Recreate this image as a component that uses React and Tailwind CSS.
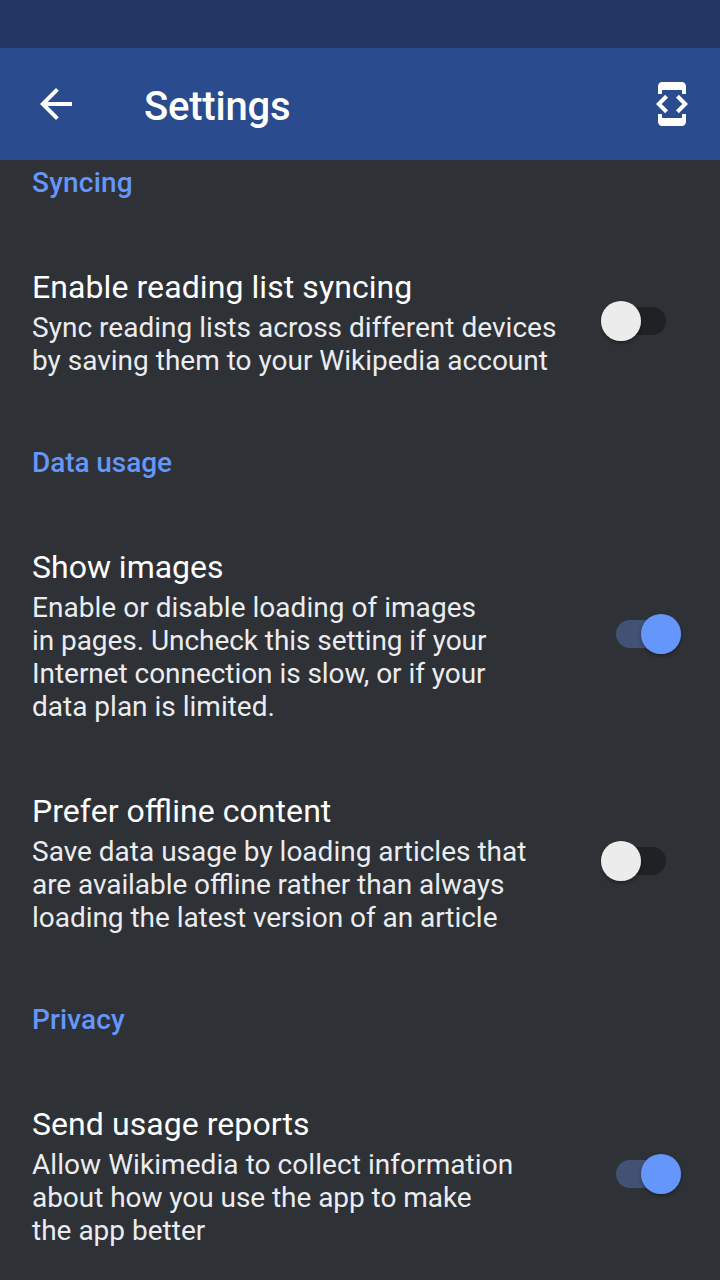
function Toggle({ on }) {
  return (
    <svg className="mb-1 h-12 w-[88px] shrink-0" viewBox="0 0 88 48" aria-hidden="true">
      <defs>
        <filter id="thumb-shadow" x="-30%" y="-30%" width="160%" height="160%">
          <feDropShadow dx="0" dy="2" stdDeviation="2" floodOpacity="0.35" />
        </filter>
      </defs>
      <rect x="16" y="10" width="50" height="28" rx="14" fill={on ? "#415274" : "#202124"} />
      <circle cx={on ? 61 : 21} cy="24" r="20" fill={on ? "#6596fb" : "#ececec"} filter="url(#thumb-shadow)" />
    </svg>
  );
}

function Category({ children, className }) {
  return <h2 className={`text-[28px] leading-[33px] font-medium text-[#6496fb] ${className}`}>{children}</h2>;
}

function Preference({ title, titleClass = "", lines, on }) {
  return (
    <section className="mt-[69px] flex items-center justify-between">
      <div className="whitespace-nowrap">
        <h3 className={`mb-[5px] text-[32px] leading-[38px] text-white ${titleClass}`}>{title}</h3>
        {lines.map(([text, tracking]) => (
          <p key={text} className={`text-[28px] leading-[33px] text-[#eaecf0] ${tracking}`}>{text}</p>
        ))}
      </div>
      <Toggle on={on} />
    </section>
  );
}

export default function App() {
  return (
    <div className="flex h-[1280px] w-[720px] flex-col overflow-hidden bg-[#2e3136] font-['Roboto',sans-serif] [font-feature-settings:'liga'_1]">
      <div className="h-12 shrink-0 bg-[#223863]" />
      <header className="flex h-28 shrink-0 items-center bg-[#2a4b8d] px-8 text-white">
        <svg className="size-12" viewBox="0 0 24 24" fill="currentColor">
          <path d="M20 11H7.83l5.59-5.59L12 4l-8 8 8 8 1.41-1.41L7.83 13H20v-2z" />
        </svg>
        <h1 className="ml-16 grow pt-[6px] text-[40px] font-medium tracking-[-0.2px]">Settings</h1>
        <svg className="-mr-2 size-12" viewBox="0 0 24 24" fill="currentColor">
          <path d="M7 5h10v2h2V3c0-1.1-.9-1.99-2-1.99L7 1c-1.1 0-2 .9-2 2v4h2V5zm8.41 11.59L20 12l-4.59-4.59L14 8.83 17.17 12 14 15.17l1.41 1.42zM10 15.17L6.83 12 10 8.83 8.59 7.41 4 12l4.59 4.59L10 15.17zM17 19H7v-2H5v4c0 1.1.9 2 2 2h10c1.1 0 2-.9 2-2v-4h-2v2z" />
        </svg>
      </header>
      <main className="flex grow flex-col px-8">
        <Category className="mt-[6px] tracking-[0.2px]">Syncing</Category>
        <Preference
          title="Enable reading list syncing"
          titleClass="tracking-[0.08px]"
          lines={[
            ["Sync reading lists across different devices", "tracking-[0.02px]"],
            ["by saving them to your Wikipedia account", ""],
          ]}
        />
        <Category className="mt-[69px] tracking-[-0.08px]">Data usage</Category>
        <Preference
          on
          title="Show images"
          lines={[
            ["Enable or disable loading of images", "tracking-[0.03px]"],
            ["in pages. Uncheck this setting if your", "tracking-[-0.06px]"],
            ["Internet connection is slow, or if your", "tracking-[-0.05px]"],
            ["data plan is limited.", ""],
          ]}
        />
        <Preference
          title="Prefer offline content"
          titleClass="tracking-[0.05px]"
          lines={[
            ["Save data usage by loading articles that", ""],
            ["are available offline rather than always", "tracking-[-0.07px]"],
            ["loading the latest version of an article", "tracking-[-0.04px]"],
          ]}
        />
        <Category className="mt-[69px] tracking-[0.12px]">Privacy</Category>
        <Preference
          on
          title="Send usage reports"
          titleClass="tracking-[0.06px]"
          lines={[
            ["Allow Wikimedia to collect information", "tracking-[0.06px]"],
            ["about how you use the app to make", "tracking-[-0.05px]"],
            ["the app better", ""],
          ]}
        />
      </main>
    </div>
  );
}
